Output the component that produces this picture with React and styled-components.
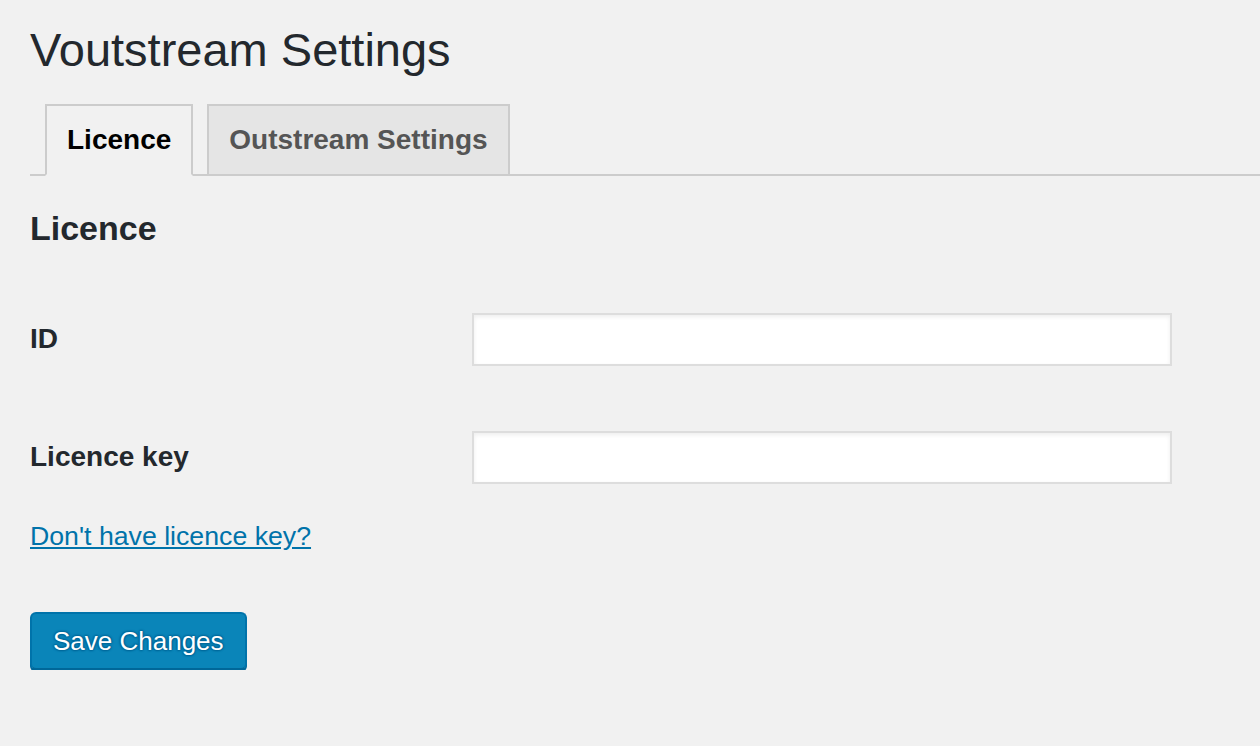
import React from 'react'
import styled, { createGlobalStyle } from 'styled-components'

const GlobalStyle = createGlobalStyle`
  html, body {
    margin: 0;
    padding: 0;
    background: #f1f1f1;
  }
  body {
    font-family: "Liberation Sans", Arial, sans-serif;
    color: #23282d;
  }
`

const Wrap = styled.div`
  padding: 20px 0 0 30px;
`

const Title = styled.h1`
  margin: 0;
  font-size: 47px;
  line-height: 60px;
  font-weight: 400;
  color: #23282d;
`

const TabBar = styled.div`
  display: flex;
  gap: 14px;
  margin-top: 24px;
  padding-left: 15px;
  border-bottom: 2px solid #ccc;
`

const Tab = styled.a`
  display: block;
  padding: 10px 20px;
  font-size: 28px;
  line-height: 48px;
  font-weight: 700;
  text-decoration: none;
  border: 2px solid #ccc;
  border-bottom-color: ${p => (p.$active ? '#f1f1f1' : '#ccc')};
  margin-bottom: -2px;
  background: ${p => (p.$active ? '#f1f1f1' : '#e5e5e5')};
  color: ${p => (p.$active ? '#000' : '#555')};
`

const SectionTitle = styled.h2`
  margin: 30px 0 0;
  font-size: 34px;
  line-height: 44px;
  font-weight: 700;
  color: #23282d;
`

const Form = styled.div`
  margin-top: 30px;
`

const Row = styled.div`
  display: grid;
  grid-template-columns: 442px 700px;
  align-items: center;
  height: 118px;
`

const Label = styled.label`
  font-size: 28px;
  font-weight: 700;
  color: #23282d;
`

const Input = styled.input`
  box-sizing: border-box;
  height: 53px;
  width: 700px;
  margin: 0;
  border: 2px solid #ddd;
  background: #fff;
  box-shadow: inset 0 2px 4px rgba(0, 0, 0, 0.07);
  outline: none;
  font-size: 26px;
  padding: 6px 10px;
`

const HelpLink = styled.a`
  display: inline-block;
  margin-top: 2px;
  font-size: 26.7px;
  line-height: 36px;
  color: #0073aa;
  text-decoration: underline;
`

const Submit = styled.div`
  margin-top: 58px;
`

const Button = styled.button`
  box-sizing: border-box;
  height: 58px;
  padding: 0 21px;
  font-family: "Liberation Sans", Arial, sans-serif;
  font-size: 26px;
  color: #fff;
  background: #0a85b9;
  border: 2px solid #0073aa;
  border-bottom-color: #006799;
  border-radius: 6px;
  box-shadow: 0 2px 0 #006799;
  text-shadow: 0 -1px 2px #006799, 1px 0 2px #006799, 0 1px 2px #006799, -1px 0 2px #006799;
  cursor: pointer;
`

export default function App() {
  return (
    <>
      <GlobalStyle />
      <Wrap>
        <Title>Voutstream Settings</Title>
        <TabBar>
          <Tab $active>Licence</Tab>
          <Tab>Outstream Settings</Tab>
        </TabBar>
        <SectionTitle>Licence</SectionTitle>
        <Form>
          <Row>
            <Label>ID</Label>
            <Input type="text" />
          </Row>
          <Row>
            <Label>Licence key</Label>
            <Input type="text" />
          </Row>
        </Form>
        <HelpLink href="#">Don't have licence key?</HelpLink>
        <Submit>
          <Button>Save Changes</Button>
        </Submit>
      </Wrap>
    </>
  )
}
